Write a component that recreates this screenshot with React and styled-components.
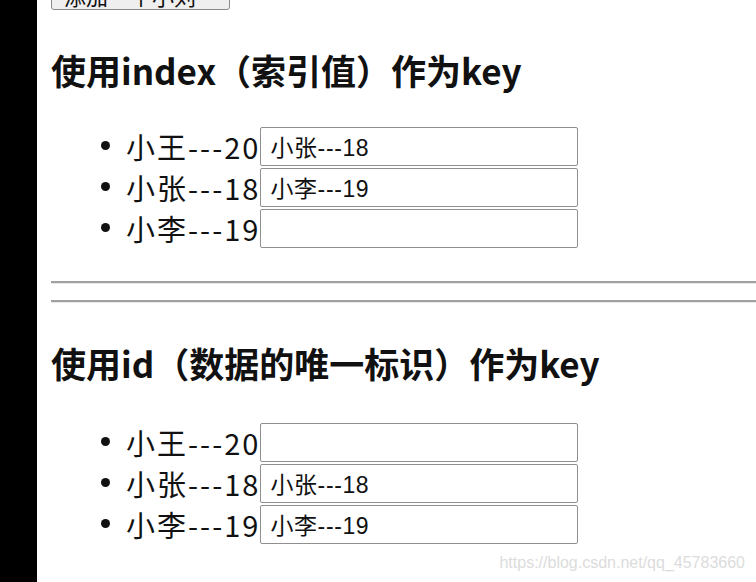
import React from "react"
import styled, { createGlobalStyle } from "styled-components"

const GlobalStyle = createGlobalStyle`
  html, body {
    margin: 0;
    padding: 0;
    background: #fff;
    overflow: hidden;
  }
  body {
    font-family: "Noto Sans CJK SC", "Noto Sans", sans-serif;
    color: #111;
  }
`

const Frame = styled.div`
  display: flex;
  height: 582px;
  width: 756px;
  position: relative;
  overflow: hidden;
`

const Strip = styled.div`
  width: 37px;
  flex: none;
  background: #000;
`

const Page = styled.div`
  flex: 1;
  padding-left: 14px;
  margin-top: -22px;
`

const AddButton = styled.button`
  display: block;
  width: 179px;
  height: 32px;
  padding: 0 12px;
  background: #efefef;
  border: 1px solid #8a8a8a;
  border-radius: 3px;
  font-family: "Noto Sans CJK SC", sans-serif;
  font-size: 22px;
  color: #111;
  text-align: left;
`

const Heading = styled.h2`
  font-size: 35px;
  line-height: 42px;
  font-weight: 700;
  margin: 39px 0 ${(p) => p.$after}px;
`

const List = styled.ul`
  margin: 0;
  padding-left: 75px;
  list-style: disc;
`

const Item = styled.li`
  height: 41px;
  line-height: 41px;
  font-size: 29px;
  white-space: nowrap;
  &::marker {
    font-size: 24px;
  }
`

const Label = styled.span`
  vertical-align: middle;
  letter-spacing: 2px;
`

const Field = styled.input`
  box-sizing: border-box;
  width: 318px;
  height: 39px;
  vertical-align: middle;
  margin: 0;
  padding: 0 9px;
  border: 1px solid #8f8f8f;
  border-radius: 2px;
  font-family: "Liberation Sans", "Noto Sans CJK SC", sans-serif;
  font-size: 23px;
  letter-spacing: 0.6px;
  color: #111;
  background: #fff;
`

const Rule = styled.hr`
  margin: ${(p) => p.$top}px 0 0;
  height: 0;
  border: none;
  border-top: 2px solid #a0a0a0;
  border-bottom: 1px solid #e8e8e8;
`

const Watermark = styled.div`
  position: absolute;
  right: 11px;
  bottom: 10px;
  font-family: "Liberation Sans", sans-serif;
  font-size: 16px;
  color: #dcdcdc;
`

const people = [
  { id: "001", name: "小王", age: 20 },
  { id: "002", name: "小张", age: 18 },
  { id: "003", name: "小李", age: 19 },
]

const Section = ({ title, values, after }) => (
  <>
    <Heading $after={after}>{title}</Heading>
    <List>
      {people.map((p, i) => (
        <Item key={p.id}>
          <Label>
            {p.name}---{p.age}
          </Label>
          <Field type="text" defaultValue={values[i]} />
        </Item>
      ))}
    </List>
  </>
)

const App = () => (
  <Frame>
    <GlobalStyle />
    <Strip />
    <Page>
      <AddButton>添加一个小刘</AddButton>
      <Section
        title="使用index（索引值）作为key"
        values={["小张---18", "小李---19", ""]}
        after={30}
      />
      <Rule $top={37} />
      <Rule $top={16} />
      <Section
        title="使用id（数据的唯一标识）作为key"
        values={["", "小张---18", "小李---19"]}
        after={33}
      />
    </Page>
    <Watermark>https://blog.csdn.net/qq_45783660</Watermark>
  </Frame>
)

export default App
